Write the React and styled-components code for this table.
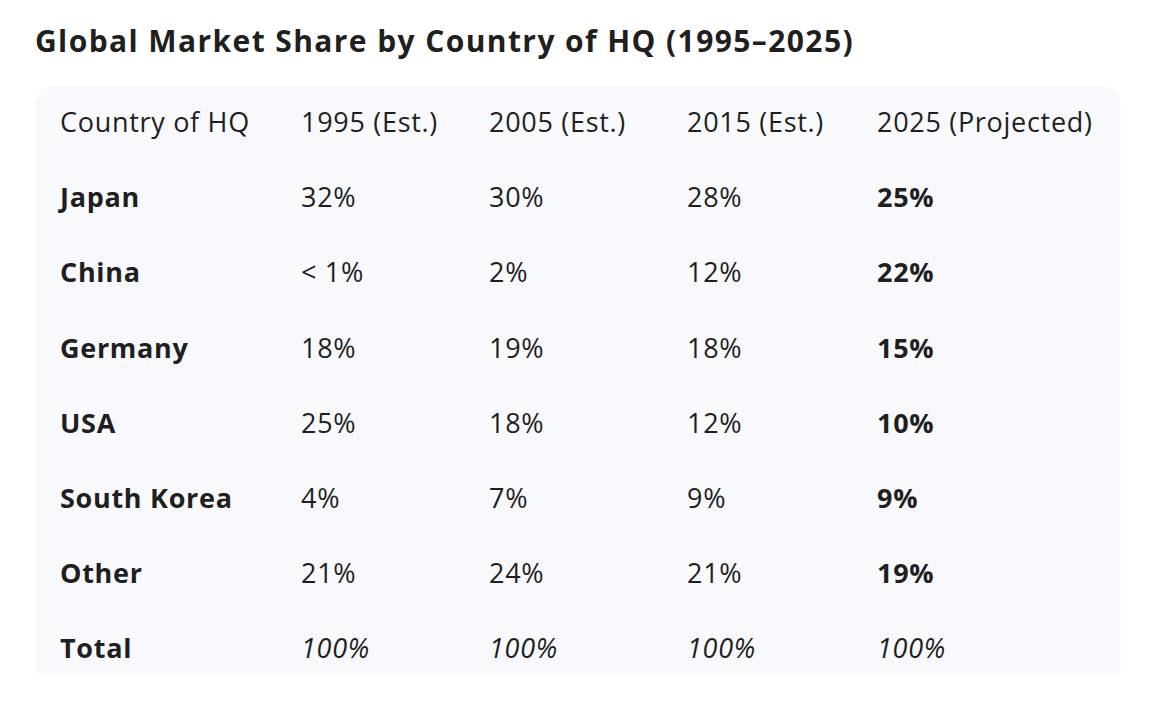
import styled, { createGlobalStyle } from "styled-components";

const rows = [
  { country: "Japan", values: ["32%", "30%", "28%", "25%"] },
  { country: "China", values: ["< 1%", "2%", "12%", "22%"] },
  { country: "Germany", values: ["18%", "19%", "18%", "15%"] },
  { country: "USA", values: ["25%", "18%", "12%", "10%"] },
  { country: "South Korea", values: ["4%", "7%", "9%", "9%"] },
  { country: "Other", values: ["21%", "24%", "21%", "19%"] },
];

const headers = [
  "Country of HQ",
  "1995 (Est.)",
  "2005 (Est.)",
  "2015 (Est.)",
  "2025 (Projected)",
];

export default function App() {
  return (
    <Page>
      <GlobalStyle />
      <Title>Global Market Share by Country of HQ (1995–2025)</Title>
      <Card>
        <Row>
          {headers.map((h) => (
            <Cell key={h}>{h}</Cell>
          ))}
        </Row>
        {rows.map((r) => (
          <Row key={r.country}>
            <Cell $bold>{r.country}</Cell>
            {r.values.map((v, i) => (
              <Cell key={i} $bold={i === 3}>
                {v}
              </Cell>
            ))}
          </Row>
        ))}
        <Row>
          <Cell $bold>Total</Cell>
          <Cell $italic>100%</Cell>
          <Cell $italic>100%</Cell>
          <Cell $italic>100%</Cell>
          <Cell $italic>100%</Cell>
        </Row>
      </Card>
    </Page>
  );
}

const GlobalStyle = createGlobalStyle`
  body {
    margin: 0;
    background: #ffffff;
    font-family: "Open Sans", "Liberation Sans", sans-serif;
    color: #1f1f1f;
  }
`;

const Page = styled.div`
  width: 1164px;
  height: 714px;
  padding: 23px 0 0 35px;
  box-sizing: border-box;
`;

const Title = styled.h1`
  margin: 0;
  font-size: 30px;
  font-weight: 700;
  letter-spacing: 1.4px;
  line-height: 36px;
  color: #1f1f1f;
`;

const Card = styled.div`
  margin-top: 27px;
  width: 1086px;
  height: 587px;
  box-sizing: border-box;
  background: #f8f9fc;
  border-radius: 20px 20px 0 0;
  padding: 0 0 0 25px;
`;

const Row = styled.div`
  display: grid;
  grid-template-columns: 241px 188px 198px 190px auto;
  height: 75.2px;
  box-sizing: border-box;
  padding-bottom: 4px;
  align-items: center;
`;

const Cell = styled.div`
  font-size: 27px;
  letter-spacing: 0.7px;
  font-weight: ${(p) => (p.$bold ? 700 : 400)};
  font-style: ${(p) => (p.$italic ? "italic" : "normal")};
  color: #1f1f1f;
  white-space: nowrap;
`;
